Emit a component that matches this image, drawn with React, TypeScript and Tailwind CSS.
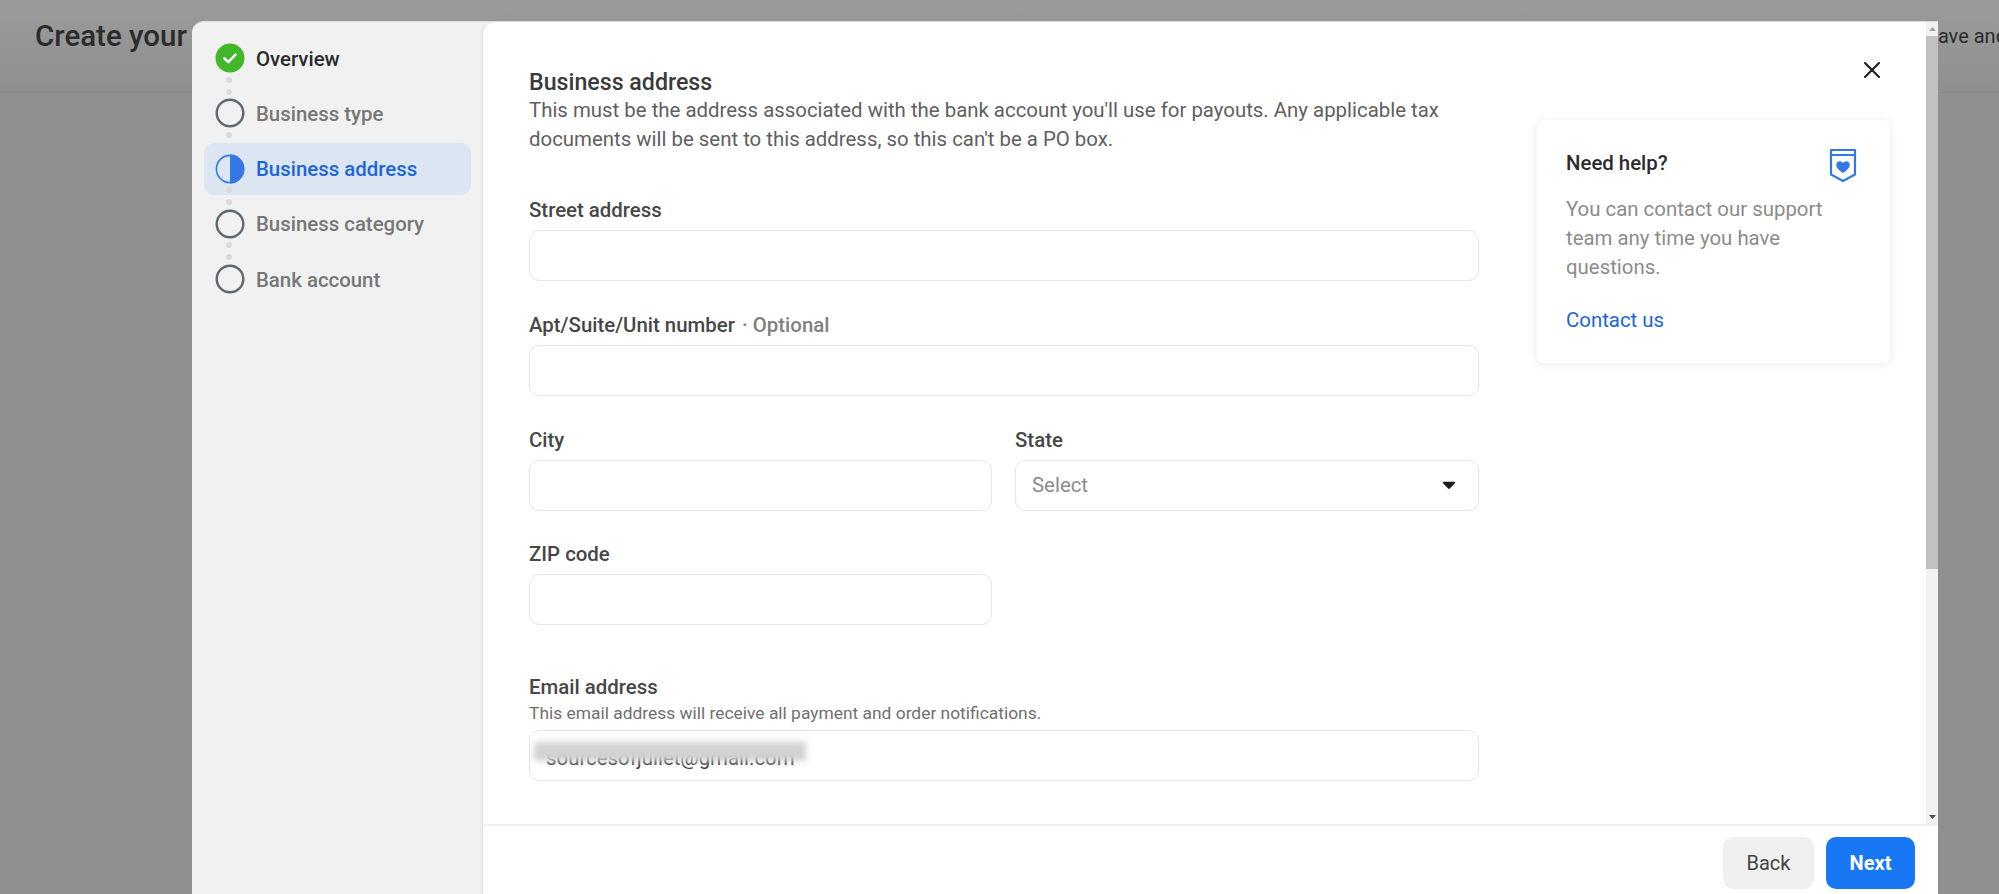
import React from 'react';
import { X } from 'lucide-react';

const steps = [
    { name: 'Overview', state: 'done' },
    { name: 'Business type', state: 'todo' },
    { name: 'Business address', state: 'active' },
    { name: 'Business category', state: 'todo' },
    { name: 'Bank account', state: 'todo' },
];

function StepIcon({ state }: { state: string }) {
    if (state === 'done') {
        return (
            <svg width="30" height="30" viewBox="0 0 30 30" className="shrink-0">
                <circle cx="15" cy="15" r="14.5" fill="#42b72a" />
                <path d="M9.5 15.5l3.8 3.6 7.2-7.4" fill="none" stroke="#fff" strokeWidth="2.6" strokeLinecap="round" strokeLinejoin="round" />
            </svg>
        );
    }
    if (state === 'active') {
        return (
            <svg width="30" height="30" viewBox="0 0 30 30" className="shrink-0">
                <circle cx="15" cy="15" r="13.6" fill="none" stroke="#3578e5" strokeWidth="1.6" />
                <path d="M15 0.6a14.4 14.4 0 0 1 0 28.8z" fill="#3578e5" />
            </svg>
        );
    }
    return (
        <svg width="30" height="30" viewBox="0 0 30 30" className="shrink-0">
            <circle cx="15" cy="15" r="13.3" fill="none" stroke="#606770" strokeWidth="2.4" />
        </svg>
    );
}

function Connector() {
    return (
        <div className="h-[25.25px] pl-[22px] flex flex-col justify-center gap-[6px]">
            <div className="w-[6px] h-[6px] rounded-full bg-[#dadada]" />
            <div className="w-[6px] h-[6px] rounded-full bg-[#dadada]" />
        </div>
    );
}

function Field({ label, optional, hint, select, className, children }: {
    label: string;
    optional?: boolean;
    hint?: string;
    select?: boolean;
    className?: string;
    children?: React.ReactNode;
}) {
    return (
        <div className={className}>
            <div className="text-[20.4px] leading-[24px] font-medium text-[#474747] whitespace-nowrap">
                {label}
                {optional && <span className="ml-[2px] text-[#808080]"> · Optional</span>}
            </div>
            {hint && <div className="text-[17.4px] leading-[20px] mt-[4px] text-[#707070]">{hint}</div>}
            <div className={`${hint ? 'mt-[7px]' : 'mt-[8px]'} relative h-[51px] rounded-[10px] border border-[#e6e6e6] bg-white flex items-center justify-between pl-[16px] pr-[22px]`}>
                {select && <span className="text-[20.4px] text-[#8c8c8c]">Select</span>}
                {select && (
                    <svg width="14" height="9" viewBox="0 0 14 9">
                        <path d="M1.5 1.5h11L7.6 6.8a.8.8 0 0 1-1.2 0z" fill="#1c1e21" stroke="#1c1e21" strokeWidth="1.6" strokeLinejoin="round" />
                    </svg>
                )}
                {children}
            </div>
        </div>
    );
}

export default function App() {
    return (
        <div className="relative w-[1999px] h-[894px] overflow-hidden bg-[#8f8f8f] font-['Roboto',sans-serif]">
            {/* page behind the dialog */}
            <div className="h-[93px] bg-gradient-to-b from-[#9b9b9b] to-[#8f8f8f] border-b border-[#888888] flex justify-between pl-[35px] pt-[17px] text-[#2b2b2b]">
                <div className="text-[29.5px] leading-[38px] font-medium">Create your shop</div>
                <div className="absolute left-[1926px] top-[17px] text-[20px] leading-[38px] whitespace-nowrap">Save and exit</div>
            </div>

            {/* dialog */}
            <div className="absolute left-[192px] top-[21px] w-[1746px] h-[900px] rounded-tl-[12px] bg-[#f1f1f1] flex border-t border-[#dedede]">
                <aside className="w-[291px] shrink-0 pt-[21px] pl-[12px] pr-[12px]">
                    {steps.map((step, i) => (
                        <div key={step.name} className="relative">
                            {i > 0 && <Connector />}
                            <div className={`relative flex items-center h-[30px] pl-[11px] gap-[11px] text-[20.4px] font-medium whitespace-nowrap ${step.state === 'done' ? 'text-[#2b2b2b]' : step.state === 'active' ? 'text-[#1b66d6]' : 'text-[#777777]'}`}>
                                {step.state === 'active' && <div className="absolute left-0 right-0 -top-[11px] -bottom-[11px] rounded-[10px] bg-[#dce5f2]" />}
                                <span className="relative"><StepIcon state={step.state} /></span>
                                <span className="relative pt-[2px]">{step.name}</span>
                            </div>
                        </div>
                    ))}
                </aside>

                <div className="flex-1 min-w-0 h-[874px] bg-white rounded-tl-[12px] flex flex-col shadow-[-1px_0_2px_rgba(0,0,0,0.08)]">
                    <div className="h-[804px] flex border-b-2 border-[#f2f2f2]">
                        <main className="flex-1 min-w-0 flex pl-[46px]">
                            <div className="w-[950px] shrink-0 pt-[46px]">
                                <h2 className="text-[23.2px] leading-[28px] font-medium text-[#3a3a3a]">Business address</h2>
                                <p className="text-[20.4px] leading-[29px] text-[#606060] whitespace-nowrap">
                                    This must be the address associated with the bank account you'll use for payouts. Any applicable tax
                                    <br />
                                    documents will be sent to this address, so this can't be a PO box.
                                </p>
                                <Field className="mt-[44px]" label="Street address" />
                                <Field className="mt-[32px]" label="Apt/Suite/Unit number" optional />
                                <div className="mt-[32px] flex gap-[23px]">
                                    <Field className="w-[463px]" label="City" />
                                    <Field className="w-[464px]" label="State" select />
                                </div>
                                <Field className="mt-[31px] w-[463px]" label="ZIP code" />
                                <Field className="mt-[50px]" label="Email address" hint="This email address will receive all payment and order notifications.">
                                    <span className="text-[20.4px] text-[#444444] translate-y-[3px]">sourcesofjuliet@gmail.com</span>
                                    <div className="absolute left-[4px] top-[11px] w-[272px] h-[19px] bg-[#d2d2d2] blur-[3px]" />
                                </Field>
                            </div>
                            <div className="flex-1 min-w-0 pl-[58px] pr-[36px]">
                                <div className="h-[98px] flex items-start justify-end pt-[34px]">
                                    <X size={28} strokeWidth={1.8} className="text-[#1c1e21] mr-[4px]" />
                                </div>
                                <div className="h-[243px] rounded-[6px] bg-white shadow-[0_1px_10px_rgba(0,0,0,0.09)] px-[29px] pt-[30px]">
                                    <div className="flex justify-between items-start">
                                        <div className="text-[20.4px] leading-[26px] font-medium text-[#2b2b2b]">Need help?</div>
                                        <svg width="28" height="36" viewBox="0 0 28 36" className="mr-[4px] -mt-[2px]">
                                            <path d="M2 2h24v24.5L14 33 2 26.5z" fill="none" stroke="#3578e5" strokeWidth="2.2" strokeLinejoin="round" />
                                            <path d="M2 7h24" stroke="#3578e5" strokeWidth="2" />
                                            <path d="M14 25c-4-2.8-6.8-5-6.8-8 0-2.2 1.7-3.8 3.6-3.8 1.3 0 2.5.7 3.2 1.9.7-1.2 1.9-1.9 3.2-1.9 1.9 0 3.6 1.6 3.6 3.8 0 3-2.8 5.2-6.8 8z" fill="#3578e5" />
                                        </svg>
                                    </div>
                                    <p className="mt-[11px] text-[20.4px] leading-[29px] text-[#8c8c8c]">
                                        You can contact our support
                                        <br />
                                        team any time you have
                                        <br />
                                        questions.
                                    </p>
                                    <div className="mt-[24px] text-[20.4px] leading-[28px] text-[#1b66d6]">Contact us</div>
                                </div>
                            </div>
                        </main>
                        {/* scrollbar */}
                        <div className="w-[12px] shrink-0 bg-[#f1f1f1] flex flex-col items-center">
                            <div className="h-[14px] flex items-center justify-center shrink-0">
                                <svg width="7" height="4" viewBox="0 0 7 4"><path d="M3.5 0L7 4H0z" fill="#a3a3a3" /></svg>
                            </div>
                            <div className="w-full h-[533px] bg-[#c1c1c1] shrink-0" />
                            <div className="flex-1" />
                            <div className="h-[14px] flex items-center justify-center shrink-0">
                                <svg width="7" height="4" viewBox="0 0 7 4"><path d="M0 0h7L3.5 4z" fill="#505050" /></svg>
                            </div>
                        </div>
                    </div>
                    <div className="flex justify-end gap-[12px] pt-[11px] pr-[23px]">
                        <button className="w-[91px] h-[52px] rounded-[10px] bg-[#f0f0f0] text-[20px] text-[#444444]">Back</button>
                        <button className="w-[89px] h-[52px] rounded-[10px] bg-[#1877f2] text-[20px] font-bold text-white">Next</button>
                    </div>
                </div>
            </div>
        </div>
    );
}
